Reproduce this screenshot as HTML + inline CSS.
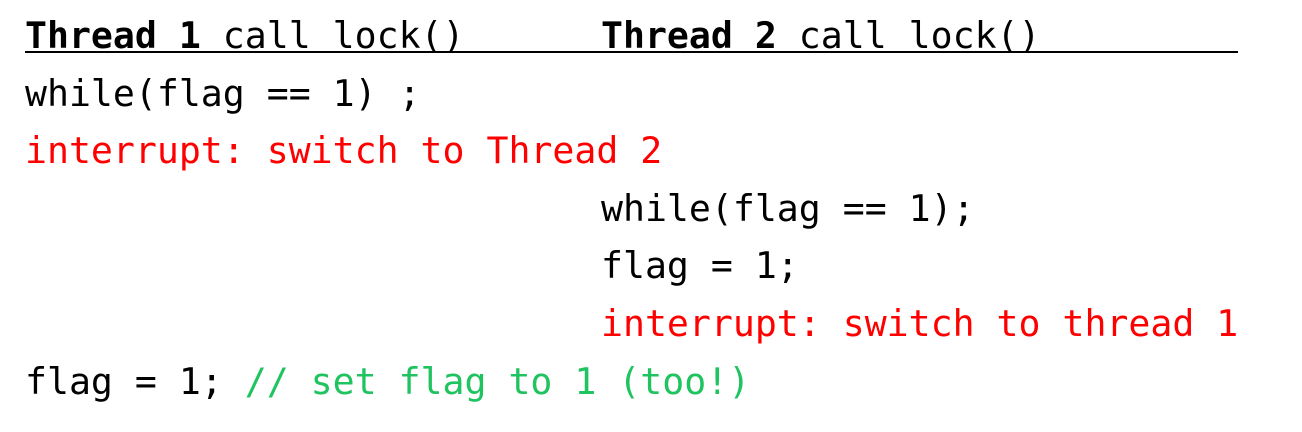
<!DOCTYPE html>
<html><head><style>
html,body{margin:0;padding:0;background:#fff;width:1302px;height:432px;overflow:hidden}
svg text{font-family:"DejaVu Sans Mono","Liberation Mono",monospace;font-size:36.5px;white-space:pre}
</style></head><body>
<svg width="1302" height="432" viewBox="0 0 1302 432">
<text x="25" y="48" fill="#000"><tspan font-weight="bold">Thread 1</tspan> call lock()</text>
<text x="601" y="48" fill="#000"><tspan font-weight="bold">Thread 2</tspan> call lock()</text>
<rect x="25" y="51" width="1213" height="2" fill="#000"/>
<text x="25" y="106" fill="#000">while(flag == 1) ;</text>
<text x="25" y="163" fill="#ff0000">interrupt: switch to Thread 2</text>
<text x="601" y="221" fill="#000">while(flag == 1);</text>
<text x="601" y="278" fill="#000">flag = 1;</text>
<text x="601" y="336" fill="#ff0000">interrupt: switch to thread 1</text>
<text x="25" y="394" fill="#000">flag = 1; <tspan fill="#1fc35f">// set flag to 1 (too!)</tspan></text>
</svg>
</body></html>
